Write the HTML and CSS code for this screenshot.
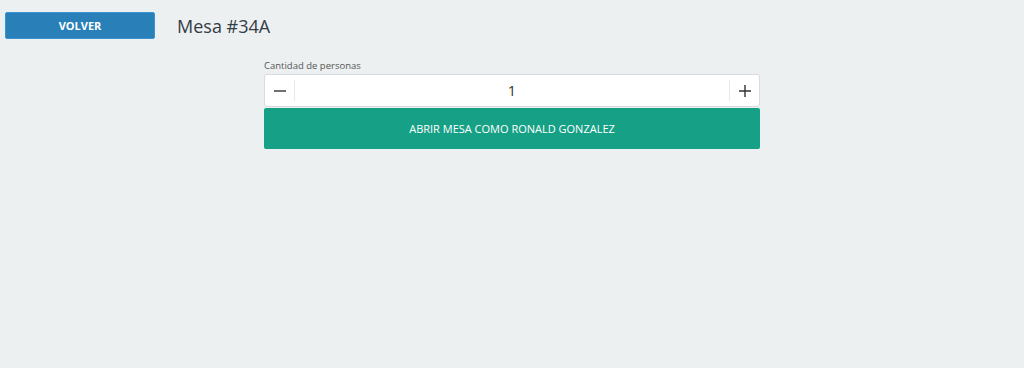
FILE: index.html
```html
<!DOCTYPE html>
<html lang="es">
<head>
  <meta charset="UTF-8">
  <meta name="viewport" content="width=device-width, initial-scale=1.0">
  <title>Mesa #34A</title>
  <link rel="stylesheet" href="styles.css">
</head>
<body>
  <div class="header">
    <button class="btn btn-back">VOLVER</button>
    <h1 class="title">Mesa #34A</h1>
  </div>

  <div class="open-table">
    <label class="field-label" for="people">Cantidad de personas</label>
    <div class="stepper">
      <button class="step-btn" id="minus-btn" aria-label="Menos">
        <svg width="14" height="14" viewBox="0 0 14 14"><path d="M1 7h12" stroke="#333" stroke-width="1.4"/></svg>
      </button>
      <input class="step-value" id="people" type="text" value="1">
      <button class="step-btn" id="plus-btn" aria-label="Más">
        <svg width="14" height="14" viewBox="0 0 14 14"><path d="M1 7h12M7 1v12" stroke="#333" stroke-width="1.4"/></svg>
      </button>
    </div>
    <button class="btn btn-open">ABRIR MESA COMO RONALD GONZALEZ</button>
  </div>
</body>
</html>
```

FILE: styles.css
```css
* {
  margin: 0;
  padding: 0;
  box-sizing: border-box;
}

body {
  font-family: "Open Sans", "Liberation Sans", sans-serif;
  background: #ecf0f1;
  color: #333;
  min-height: 100vh;
}

.header {
  display: flex;
  align-items: center;
  gap: 22px;
  padding: 12px 0 0 5px;
}

.btn {
  border: none;
  cursor: pointer;
  font-family: inherit;
  color: white;
}

.btn-back {
  width: 150px;
  height: 27px;
  background: #2980b9;
  border: 1px solid #3b93d3;
  border-radius: 2px;
  font-size: 11px;
  font-weight: 700;
}

.title {
  font-size: 18px;
  font-weight: 400;
  color: #343c45;
}

.open-table {
  width: 496px;
  margin: 20px auto 0;
  display: flex;
  flex-direction: column;
}

.field-label {
  font-size: 9.5px;
  color: #555;
  margin-bottom: 2px;
}

.stepper {
  display: flex;
  align-items: center;
  height: 33px;
  background: white;
  border: 1px solid #d9dcdf;
  border-radius: 3px;
}

.step-btn {
  width: 29px;
  height: 100%;
  border: none;
  background: transparent;
  display: flex;
  align-items: center;
  justify-content: center;
  cursor: pointer;
}

.step-value {
  flex: 1;
  height: 21px;
  border: none;
  border-left: 1px solid #e6e8ea;
  border-right: 1px solid #e6e8ea;
  text-align: center;
  font-family: inherit;
  font-size: 14.5px;
  color: #333;
  outline: none;
}

.btn-open {
  margin-top: 1px;
  height: 41px;
  background: #16a085;
  border-radius: 2px;
  font-size: 11px;
  font-weight: 500;
}
```
